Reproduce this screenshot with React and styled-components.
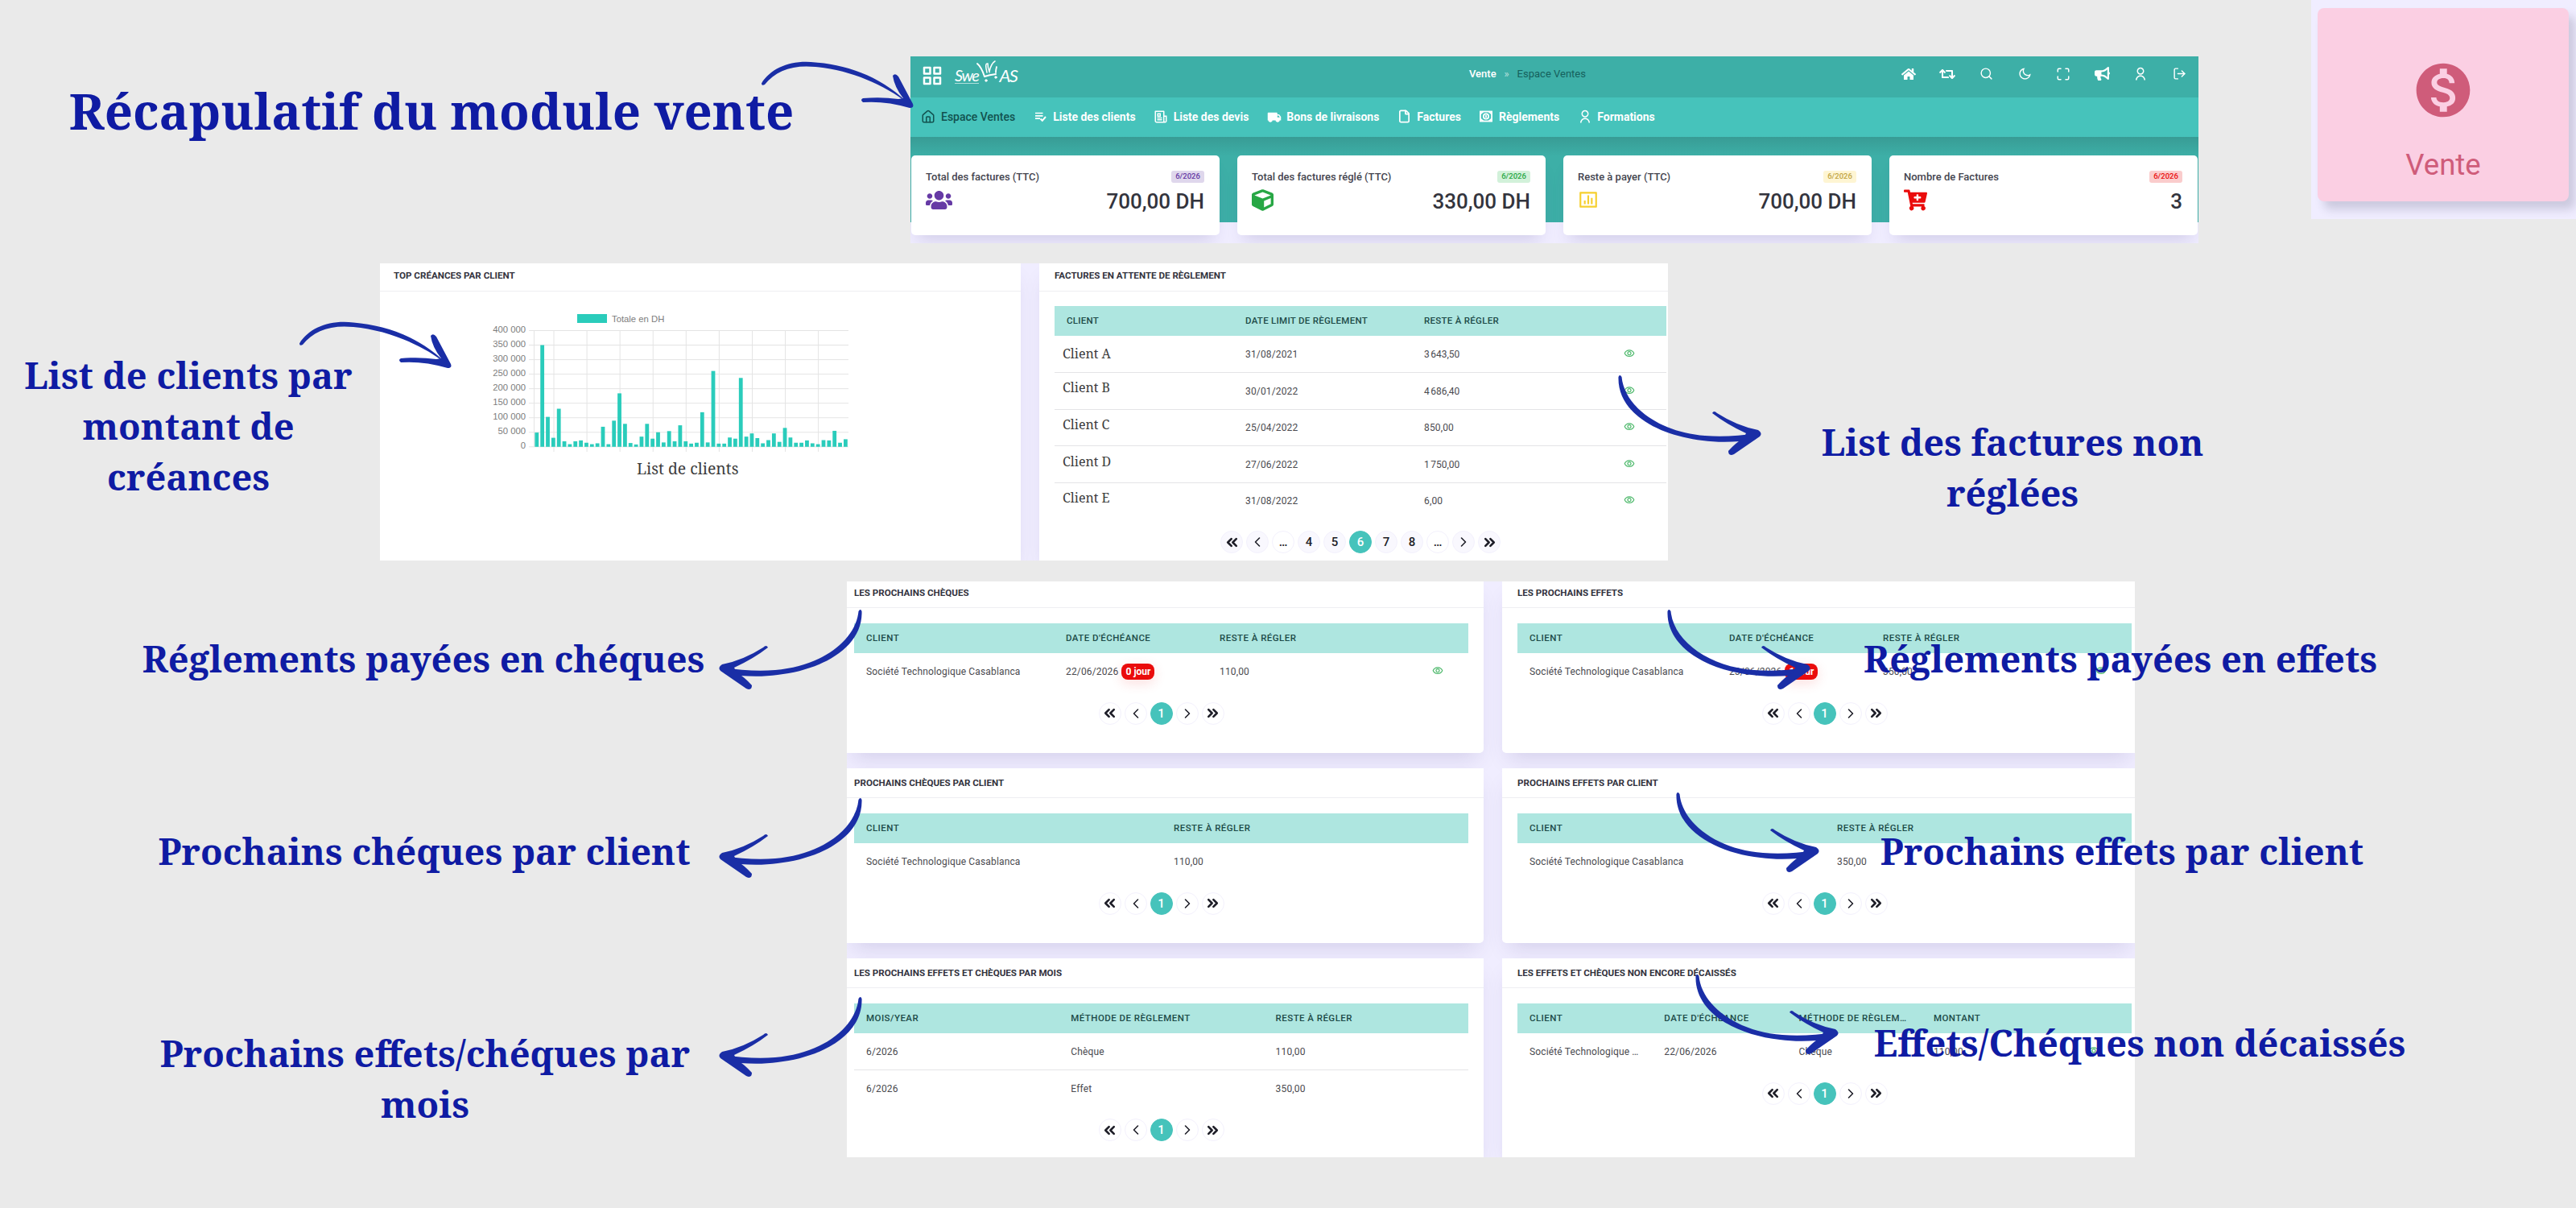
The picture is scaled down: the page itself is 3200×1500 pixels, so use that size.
import React from 'react'
import styled, { createGlobalStyle } from 'styled-components'
import { BiGridAlt } from 'react-icons/bi'
import { FaHome, FaRetweet, FaBullhorn, FaUsers, FaCube, FaCartPlus } from 'react-icons/fa'
import { FiSearch, FiMaximize } from 'react-icons/fi'
import { RiUserLine, RiMoonLine, RiBarChartBoxLine, RiTruckFill, RiNewspaperLine } from 'react-icons/ri'
import { MdMonetizationOn, MdOutlineVisibility } from 'react-icons/md'
import { House, File, LogOut, ChevronsLeft, ChevronsRight, ChevronLeft, ChevronRight } from 'lucide-react'

const navItems = [
    { label: 'Espace Ventes', icon: <House size={18} />, active: true },
    { label: 'Liste des clients', icon: <ListIcon /> },
    { label: 'Liste des devis', icon: <RiNewspaperLine size={18} /> },
    { label: 'Bons de livraisons', icon: <RiTruckFill size={18} /> },
    { label: 'Factures', icon: <File size={17} strokeWidth={2.4} /> },
    { label: 'Règlements', icon: <CashIcon /> },
    { label: 'Formations', icon: <RiUserLine size={18} /> },
]

const tools = [
    <FaHome size={18} />,
    <FaRetweet size={20} />,
    <FiSearch size={17} />,
    <RiMoonLine size={17} />,
    <FiMaximize size={18} />,
    <FaBullhorn size={19} />,
    <RiUserLine size={18} />,
    <LogOut size={17} />,
]

const stats = [
    { title: 'Total des factures (TTC)', value: '700,00 DH', color: '#663aa5', bg: '#dfd7ec', icon: <FaUsers size={33} /> },
    { title: 'Total des factures réglé (TTC)', value: '330,00 DH', color: '#28a745', bg: '#d2f1da', icon: <FaCube size={27} /> },
    { title: 'Reste à payer (TTC)', value: '700,00 DH', color: '#f6d02f', text: '#c2a544', bg: '#fef5d3', icon: <RiBarChartBoxLine size={26} /> },
    { title: 'Nombre de Factures', value: '3', color: '#ea0c0c', bg: '#facccc', icon: <FaCartPlus size={29} /> },
]

// amounts in DH, one bar per client
const amounts = [
    49, 350, 103, 31, 131, 19, 9, 19, 22, 14, 9, 12, 69, 9, 90, 184, 79, 13, 8, 35, 79, 28, 50, 15, 54, 19, 74, 19, 11, 14,
    119, 15, 261, 11, 11, 32, 28, 237, 35, 46, 30, 12, 23, 46, 17, 65, 32, 14, 14, 22, 12, 9, 23, 22, 55, 14, 26,
]

const eye = <MdOutlineVisibility size={14} />

export default function App() {
    return (
        <Board>
            <GlobalStyle />
            <HeaderShot>
                <TopBar>
                    <Brand>
                        <BiGridAlt size={30} />
                        <Logo />
                    </Brand>
                    <Crumbs>
                        <b>Vente</b>
                        <i>»</i>
                        <span>Espace Ventes</span>
                    </Crumbs>
                    <Tools>
                        {tools.map((icon, index) => <Tool key={index}>{icon}</Tool>)}
                    </Tools>
                </TopBar>
                <Nav>
                    {navItems.map((item) => (
                        <NavItem key={item.label} $active={item.active}>
                            <span>{item.icon}</span>
                            {item.label}
                        </NavItem>
                    ))}
                </Nav>
                <Stats>
                    {stats.map((stat) => (
                        <StatCard key={stat.title}>
                            <StatTop>
                                {stat.title}
                                <Period $color={stat.text || stat.color} $bg={stat.bg}>6/2026</Period>
                            </StatTop>
                            <StatBottom $color={stat.color}>
                                {stat.icon}
                                <strong>{stat.value}</strong>
                            </StatBottom>
                        </StatCard>
                    ))}
                </Stats>
            </HeaderShot>

            <DebtShot>
                <Card $flat>
                    <CardTitle $left={17} $height={35} $top={8}>Top créances par client</CardTitle>
                    <DebtChart />
                </Card>
                <Card $flat>
                    <CardTitle $left={19} $height={35} $top={8}>Factures en attente de règlement</CardTitle>
                    <Table
                        margin="18px 2px 0 19px"
                        columns="222px 222px 1fr 53px"
                        spacing={0.28}
                        head={['Client', 'Date limit de règlement', 'Reste à régler', '']}
                        rows={[
                            [<ClientName $up={1}>Client A</ClientName>, '31/08/2021', '3\u202f643,50', eye],
                            [<ClientName $up={5}>Client B</ClientName>, '30/01/2022', '4\u202f686,40', eye],
                            [<ClientName $up={4}>Client C</ClientName>, '25/04/2022', '850,00', eye],
                            [<ClientName $up={4}>Client D</ClientName>, '27/06/2022', '1\u202f750,00', eye],
                            [<ClientName $up={4}>Client E</ClientName>, '31/08/2022', '6,00', eye],
                        ]}
                        pages={['…', 4, 5, 6, 7, 8, '…']}
                        current={6}
                        filled
                    />
                </Card>
            </DebtShot>

            <PaymentsShot>
                <Card $cut="left">
                    <CardTitle $left={9} $height={33}>Les prochains chèques</CardTitle>
                    <Table
                        margin="19px 19px 0 9px"
                        columns="248px 191px 1fr 45px"
                        head={['Client', "Date d'échéance", 'Reste à régler', '']}
                        rows={[['Société Technologique Casablanca', <>22/06/2026 <Days>0 jour</Days></>, '110,00', eye]]}
                    />
                </Card>
                <Card $cut="right">
                    <CardTitle $left={19} $height={33}>Les prochains effets</CardTitle>
                    <Table
                        margin="19px 4px 0 19px"
                        columns="248px 191px 1fr 45px"
                        head={['Client', "Date d'échéance", 'Reste à régler', '']}
                        rows={[['Société Technologique Casablanca', <>23/06/2026 <Days>1 jour</Days></>, '350,00', eye]]}
                    />
                </Card>
                <Card $cut="left">
                    <CardTitle $left={9} $height={37}>Prochains chèques par client</CardTitle>
                    <Table
                        margin="19px 19px 0 9px"
                        columns="382px 1fr"
                        head={['Client', 'Reste à régler']}
                        rows={[['Société Technologique Casablanca', '110,00']]}
                    />
                </Card>
                <Card $cut="right">
                    <CardTitle $left={19} $height={37}>Prochains effets par client</CardTitle>
                    <Table
                        margin="19px 4px 0 19px"
                        columns="382px 1fr"
                        head={['Client', 'Reste à régler']}
                        rows={[['Société Technologique Casablanca', '350,00']]}
                    />
                </Card>
                <Card $cut="left" $flat>
                    <CardTitle $left={9} $height={37}>Les prochains effets et chèques par mois</CardTitle>
                    <Table
                        margin="19px 19px 0 9px"
                        columns="254.3px 254.3px 1fr"
                        head={['Mois/Year', 'Méthode de règlement', 'Reste à régler']}
                        rows={[
                            ['6/2026', 'Chèque', '110,00'],
                            ['6/2026', 'Effet', '350,00'],
                        ]}
                    />
                </Card>
                <Card $cut="right" $flat>
                    <CardTitle $left={19} $height={37}>Les effets et chèques non encore décaissés</CardTitle>
                    <Table
                        margin="19px 4px 0 19px"
                        columns="167.3px 167.3px 167.3px 1fr 54px"
                        head={['Client', "Date d'échéance", 'Méthode de règlem…', 'Montant', '']}
                        rows={[['Société Technologique …', '22/06/2026', 'Chèque', '110,00', eye]]}
                    />
                </Card>
            </PaymentsShot>

            <ModuleShot>
                <ModuleTile>
                    <MdMonetizationOn size={80} />
                    Vente
                </ModuleTile>
            </ModuleShot>

            <SwoopArrow $x={930} $y={70} />
            <SwoopArrow $x={356} $y={393} />
            <HookArrow $x={2000} $y={455} />
            <HookArrow $x={2061} $y={746} />
            <HookArrow $x={2072} $y={973} />
            <HookArrow $x={2096} $y={1199} />
            <HookArrow $x={881} $y={746} $flip />
            <HookArrow $x={881} $y={980} $flip />
            <HookArrow $x={881} $y={1227} $flip />

            <Note $x={36} $y={95} $w={1000} $size={61.7} $line={84}>Récapulatif du module vente</Note>
            <Note $x={-16} $y={434} $w={500}>List de clients par<br />montant de<br />créances</Note>
            <Note $x={2200} $y={517} $w={600}>List des factures non<br />réglées</Note>
            <Note $x={126} $y={786} $w={800}>Réglements payées en chéques</Note>
            <Note $x={2234} $y={786} $w={800}>Réglements payées en effets</Note>
            <Note $x={127} $y={1025} $w={800}>Prochains chéques par client</Note>
            <Note $x={2236} $y={1025} $w={800}>Prochains effets par client</Note>
            <Note $x={128} $y={1276} $w={800}>Prochains effets/chéques par<br />mois</Note>
            <Note $x={2258} $y={1263} $w={800}>Effets/Chéques non décaissés</Note>
        </Board>
    )
}

function Logo() {
    return (
        <LogoStyle>
            <span>Swe</span>
            <svg width="30" height="28" viewBox="0 0 28 28" fill="none" stroke="#fff" strokeLinecap="round">
                <path d="M2 4 Q7 8 11 20" strokeWidth="2" />
                <path d="M14 15 Q11 3 15 4 Q15 9 17 14 Q19 4 24 1" strokeWidth="1.5" />
                <path d="M26 8 Q25 12 25 15" strokeWidth="1.8" />
                <path d="M11 20 Q17 18 25 17" strokeWidth="2" />
                <circle cx="13" cy="25" r="1.2" fill="#fff" />
                <circle cx="25" cy="21" r="1.2" fill="#fff" />
            </svg>
            <span>AS</span>
        </LogoStyle>
    )
}

function ListIcon() {
    return (
        <svg width="17" height="17" viewBox="0 0 17 17" fill="none" stroke="currentColor" strokeWidth="1.7">
            <path d="M2 4.500 H11.500 M2 7.800 H11.500 M2 11.100 H8" />
            <path d="M8.500 11.500 L10.800 13.800 L15 9" strokeWidth="2" />
        </svg>
    )
}

function CashIcon() {
    return (
        <svg width="18" height="17" viewBox="0 0 24 24" fill="none" stroke="currentColor" strokeWidth="2.5">
            <rect x="2" y="3.5" width="20" height="17" />
            <circle cx="12" cy="12" r="4.5" />
            <path d="M2 8 L7 3.5 M17 3.5 L22 8 M2 16 L7 20.5 M17 20.5 L22 16 M12 10v4" />
        </svg>
    )
}

function DebtChart() {
    const ticks = [400, 350, 300, 250, 200, 150, 100, 50, 0]
    return (
        <ChartBox>
            <Legend>Totale en DH</Legend>
            <Plot>
                <Axis>
                    {ticks.map((t) => <span key={t}>{t ? `${t} 000` : '0'}</span>)}
                </Axis>
                <svg width="400" height="156" viewBox="0 0 400 156">
                    <g stroke="#e4e4e4" strokeWidth="1">
                        {ticks.map((t, i) => <line key={t} x1="0" x2="397" y1={3.5 + i * 18.04} y2={3.5 + i * 18.04} />)}
                        <line x1="6.5" x2="6.5" y1="3" y2="148" />
                        {[...Array(9)].map((_, i) => (
                            <line key={i} x1={31 + i * 41.08} x2={31 + i * 41.08} y1="3" y2="154" />
                        ))}
                    </g>
                    <g fill="#2accbb">
                        {amounts.map((value, i) => (
                            <rect key={i} x={7.4 + i * 6.85} width="4.8" y={147.8 - value * 0.3608} height={value * 0.3608} />
                        ))}
                    </g>
                </svg>
            </Plot>
            <ChartCaption>List de clients</ChartCaption>
        </ChartBox>
    )
}

function Table({ head, rows, columns, margin, spacing, pages = [1], current = 1, filled }) {
    return (
        <TableStyle $margin={margin}>
            <HeadRow $columns={columns} $spacing={spacing}>
                {head.map((cell, index) => <span key={index}>{cell}</span>)}
            </HeadRow>
            {rows.map((row, index) => (
                <Row key={index} $columns={columns}>
                    {row.map((cell, i) => <div key={i}>{cell}</div>)}
                </Row>
            ))}
            <Pager>
                <Page $filled={filled}><ChevronsLeft size={21} strokeWidth={3} /></Page>
                <Page $filled={filled}><ChevronLeft size={20} strokeWidth={1.9} /></Page>
                {pages.map((page, index) => (
                    <Page key={index} $active={page === current} $filled={filled && page !== '…'}>{page}</Page>
                ))}
                <Page $filled={filled}><ChevronRight size={20} strokeWidth={1.9} /></Page>
                <Page $filled={filled}><ChevronsRight size={21} strokeWidth={3} /></Page>
            </Pager>
        </TableStyle>
    )
}

function SwoopArrow(props) {
    return (
        <Arrow {...props} width="215" height="70" viewBox="0 0 215 70">
            <path d="M16 33.500 C28 14 53 4 83 7.500 C125 11 168 26 203 63 L199 59 C167 34 125 17 83 13 C55 10 33 18 20 35 Q16 37 16 33.500 Z" />
            <path d="M179 24 Q182 20 186 25 L204 59 Q206 64 200 64 Q170 55 142 57 Q138 54 142 52 Q165 50 186 53 L192 52 Q181 38 179 24 Z" />
        </Arrow>
    )
}

function HookArrow(props) {
    return (
        <Arrow {...props} width="200" height="110" viewBox="0 0 200 110">
            <path d="M10.500 13 Q12 9 14.500 13 C18 50 62 82 118 86 C140 88 160 86 184 83 L180 91 C160 94 135 95 115 92 C60 86 9 58 10.500 13 Z" />
            <path d="M127 58 Q129 54 133 58 Q158 74 184 79 Q190 83 186 87 L154 109 Q147 112 147 105 Q157 94 166 89 L169 83 Q145 72 127 58 Z" />
        </Arrow>
    )
}

const GlobalStyle = createGlobalStyle`
    * {
        box-sizing: border-box;
    }

    body {
        margin: 0;
        background-color: #eaeaea;
        font-family: Roboto, "Liberation Sans", sans-serif;
    }
`

const Board = styled.div`
    position: relative;
    width: 3200px;
    height: 1500px;
    overflow: hidden;
    padding-top: 70px;
    background-color: #eaeaea;
`

const HeaderShot = styled.header`
    width: 1600px;
    height: 232px;
    margin-left: 1131px;
    overflow: hidden;
    background: linear-gradient(#3dafa7 206px, #f0edff 206px);
`

const TopBar = styled.div`
    display: grid;
    grid-template-columns: 694px 1fr auto;
    align-items: center;
    height: 51px;
    padding: 0 0 8px 0;
    color: #fff;
`

const Brand = styled.div`
    display: flex;
    align-items: center;
    gap: 13px;
    padding: 4px 0 0 12px;
`

const LogoStyle = styled.div`
    display: flex;
    align-items: center;
    font: italic 22px/22px Lato, sans-serif;
    letter-spacing: -1.4px;

    span:first-child {
        font-size: 20px;
        border-bottom: 1px solid rgba(255, 255, 255, .6);
        line-height: 19px;
    }

    svg {
        margin: -9px 1px 0 -5px;
    }
`

const Crumbs = styled.div`
    display: flex;
    align-items: center;
    gap: 10px;
    font-size: 13px;

    b {
        font-weight: 500;
    }

    i {
        width: 6px;
        font-style: normal;
        opacity: .6;
    }

    span {
        color: #15605c;
    }
`

const Tools = styled.div`
    display: flex;
`

const Tool = styled.div`
    width: 48px;
    height: 24px;
    display: flex;
    align-items: center;
    justify-content: center;
`

const Nav = styled.nav`
    display: flex;
    align-items: center;
    gap: 22px;
    height: 49px;
    padding: 0 0 2px 12px;
    background-color: #46c3bb;
`

const NavItem = styled.div`
    display: flex;
    align-items: center;
    font-size: 14px;
    font-weight: ${({ $active }) => $active ? 500 : 700};
    color: ${({ $active }) => $active ? '#12524f' : '#fff'};

    span {
        display: flex;
        justify-content: center;
        width: 19px;
        margin-right: 6px;
    }

    &:first-child span {
        margin-right: 7px;
    }
`

const Stats = styled.div`
    display: grid;
    grid-template-columns: repeat(4, 1fr);
    gap: 22px;
    padding: 23px 1px 0;
    background: linear-gradient(#389c95, rgba(61, 175, 167, 0) 24px);
`

const StatCard = styled.div`
    height: 99px;
    padding: 17px 19px 0 18px;
    border-radius: 5px;
    background-color: #fff;
    box-shadow: 0 14px 20px -8px rgba(70, 60, 130, .18);
`

const StatTop = styled.div`
    display: flex;
    align-items: center;
    justify-content: space-between;
    height: 19px;
    font-size: 13px;
    font-weight: 500;
    color: #45454f;
`

const Period = styled.span`
    width: 41px;
    height: 15px;
    border-radius: 3px;
    font-size: 9.5px;
    font-weight: 500;
    line-height: 14px;
    text-align: center;
    color: ${({ $color }) => $color};
    background-color: ${({ $bg }) => $bg};
`

const StatBottom = styled.div`
    display: flex;
    align-items: center;
    justify-content: space-between;
    height: 36px;
    padding-top: 3px;
    color: ${({ $color }) => $color};

    svg {
        margin-top: -1px;
    }

    strong {
        padding-top: 2px;
        font-size: 26px;
        font-weight: 500;
        color: #33343d;
    }
`

const DebtShot = styled.section`
    display: grid;
    grid-template-columns: 796px 781px;
    gap: 23px;
    width: 1600px;
    height: 369px;
    margin: 25px 0 0 472px;
    overflow: hidden;
    background-color: #f0edff;
`

const PaymentsShot = styled.section`
    display: grid;
    grid-template-columns: 791px 786px;
    grid-template-rows: 213px 217px 247px;
    gap: 19px 23px;
    width: 1600px;
    height: 715px;
    margin: 26px 0 0 1052px;
    overflow: hidden;
    background-color: #f0edff;
`

const Card = styled.div`
    border-radius: ${({ $flat, $cut }) => $flat ? 0 : $cut === 'left' ? '0 0 5px 0' : '0 0 0 5px'};
    background-color: #fff;
    box-shadow: 0 14px 24px -8px rgba(70, 60, 130, .17);
`

const CardTitle = styled.h2`
    height: ${({ $height }) => $height}px;
    margin: 0;
    padding: ${({ $height, $top }) => $top || $height - 26}px 0 0 ${({ $left }) => $left}px;
    border-bottom: 1px solid #eeeef2;
    font-size: 11.6px;
    font-weight: 700;
    line-height: 14px;
    text-transform: uppercase;
    color: #33333e;
`

const TableStyle = styled.div`
    margin: ${({ $margin }) => $margin};
`

const HeadRow = styled.div`
    display: grid;
    grid-template-columns: ${({ $columns }) => $columns};
    align-items: center;
    height: 37px;
    padding: 0 0 1px 15px;
    font-size: 11.5px;
    font-weight: 500;
    letter-spacing: ${({ $spacing }) => $spacing || 0.45}px;
    text-transform: uppercase;
    white-space: nowrap;
    color: #1d4b48;
    background-color: #aee6e0;
`

const Row = styled.div`
    display: grid;
    grid-template-columns: ${({ $columns }) => $columns};
    align-items: center;
    height: 45.4px;
    padding: 1px 0 0 15px;
    font-size: 12px;
    letter-spacing: .15px;
    color: #4a4a4f;

    & + & {
        border-top: 1px solid #e4e4e6;
    }

    svg {
        display: block;
        margin-top: -2px;
        color: #4cb86a;
    }
`

const ClientName = styled.div`
    margin: ${({ $up }) => -($up || 0) * 2}px 0 0 -5px;
    font: 16px/20px "Noto Serif", "DejaVu Serif", serif;
    letter-spacing: 0;
    color: #3c3c3c;
`

const Days = styled.span`
    display: inline-block;
    width: 41px;
    height: 20px;
    margin-left: 1px;
    border-radius: 8px;
    font-weight: 700;
    line-height: 20px;
    letter-spacing: 0;
    text-align: center;
    color: #fff;
    background-color: #ea0c0c;
    box-shadow: 0 4px 16px rgba(234, 12, 12, .14);
`

const Pager = styled.div`
    display: flex;
    justify-content: center;
    gap: 4px;
    padding-top: 15.5px;
`

const Page = styled.div`
    display: flex;
    align-items: center;
    justify-content: center;
    width: 28px;
    height: 28px;
    border: 1px solid ${({ $active }) => $active ? '#46c3bb' : '#f3f1fd'};
    border-radius: 50%;
    font-size: 15px;
    font-weight: 500;
    color: ${({ $active }) => $active ? '#fff' : '#1e1e28'};
    background-color: ${({ $active, $filled }) => $active ? '#46c3bb' : $filled ? '#f9f8fe' : '#fff'};

    svg {
        flex-shrink: 0;
    }
`

const ChartBox = styled.div`
    padding: 27px 0 0 131px;
`

const Legend = styled.div`
    display: flex;
    align-items: center;
    gap: 6px;
    padding-left: 114px;
    height: 13px;
    font: 11.3px "Liberation Sans", sans-serif;
    color: #7d7d7d;

    &::before {
        content: '';
        width: 37px;
        height: 11px;
        background-color: #2accbb;
    }
`

const Plot = styled.div`
    display: flex;
    gap: 4px;
    margin-top: 5px;
`

const Axis = styled.div`
    display: flex;
    flex-direction: column;
    width: 50px;
    margin-top: -7px;
    text-align: right;
    font: 11.3px/18.04px "Liberation Sans", sans-serif;
    color: #7d7d7d;
`

const ChartCaption = styled.div`
    margin: 8px 0 0 188px;
    font: 19.4px/22px "Noto Serif", "DejaVu Serif", serif;
    color: #3c3c3c;
`

const ModuleShot = styled.aside`
    position: absolute;
    top: 0;
    right: 0;
    width: 329px;
    height: 272px;
    padding: 10px 9px 22px 8px;
    overflow: hidden;
    background-color: #f0edff;
`

const ModuleTile = styled.div`
    display: flex;
    flex-direction: column;
    align-items: center;
    gap: 32px;
    height: 240px;
    padding-top: 62px;
    border-radius: 8px;
    font-size: 36.5px;
    line-height: 42px;
    color: #cf5c7a;
    background-color: #fbcfe3;
    box-shadow: 8px 10px 12px rgba(60, 60, 90, .2);
`

const Note = styled.p`
    position: absolute;
    left: ${({ $x }) => $x}px;
    top: ${({ $y }) => $y}px;
    width: ${({ $w }) => $w}px;
    margin: 0;
    font-family: "Noto Serif", "DejaVu Serif", serif;
    font-size: ${({ $size }) => $size || 45.2}px;
    font-weight: 700;
    line-height: ${({ $line }) => $line || 63}px;
    text-align: center;
    color: #0f1ba3;
`

const Arrow = styled.svg`
    position: absolute;
    left: ${({ $x }) => $x}px;
    top: ${({ $y }) => $y}px;
    overflow: visible;
    fill: #1a2ea6;
    transform: ${({ $flip }) => $flip ? 'scaleX(-1)' : 'none'};
`
